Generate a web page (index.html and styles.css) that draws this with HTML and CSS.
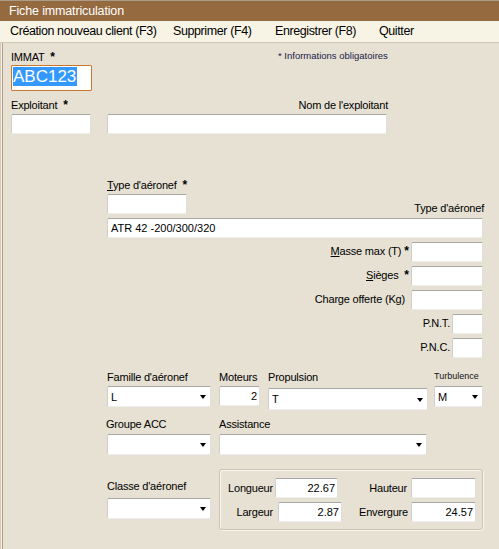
FILE: index.html
```html
<!DOCTYPE html>
<html lang="fr">
<head>
<meta charset="utf-8">
<title>Fiche immatriculation</title>
<link rel="stylesheet" href="styles.css">
</head>
<body>
<div class="window">
  <div class="titlebar">Fiche immatriculation</div>
  <nav class="menubar">
    <span class="menu-item m1">Création nouveau client (F3)</span>
    <span class="menu-item m2">Supprimer (F4)</span>
    <span class="menu-item m3">Enregistrer (F8)</span>
    <span class="menu-item m4">Quitter</span>
  </nav>
  <main class="content">
    <section class="row-immat">
      <div class="field w-immat">
        <label class="lbl">IMMAT <span class="req">*</span></label>
        <div class="input input-focus"><span class="sel">ABC123</span></div>
      </div>
      <div class="note">* Informations obligatoires</div>
    </section>

    <section class="row-exploitant">
      <div class="field w80">
        <label class="lbl">Exploitant <span class="req">*</span></label>
        <div class="input h20"></div>
      </div>
      <div class="field w280">
        <label class="lbl right">Nom de l'exploitant</label>
        <div class="input h20"></div>
      </div>
    </section>

    <section class="aircraft">
      <div class="type-head">
        <div class="field w80">
          <label class="lbl"><u>T</u>ype d'aéronef <span class="req">*</span></label>
          <div class="input h20"></div>
        </div>
        <span class="lbl type-right">Type d'aéronef</span>
      </div>
      <div class="input h20 wide">ATR 42 -200/300/320</div>

      <div class="spec">
        <span class="lbl"><u>M</u>asse max (T)<span class="req">*</span></span>
        <div class="input h20 w72"></div>
      </div>
      <div class="spec">
        <span class="lbl"><u>S</u>ièges <span class="req">*</span></span>
        <div class="input h20 w72"></div>
      </div>
      <div class="spec">
        <span class="lbl gap6">Charge offerte (Kg)</span>
        <div class="input h20 w72"></div>
      </div>
      <div class="spec">
        <span class="lbl">P.N.T.</span>
        <div class="input h20 w31"></div>
      </div>
      <div class="spec">
        <span class="lbl">P.N.C.</span>
        <div class="input h20 w31"></div>
      </div>
    </section>

    <section class="row-famille">
      <div class="field w104">
        <label class="lbl">Famille d'aéronef</label>
        <div class="select"><span class="val">L</span><span class="arrow"></span></div>
      </div>
      <div class="field w41">
        <label class="lbl">Moteurs</label>
        <div class="input h20 num">2</div>
      </div>
      <div class="field w160">
        <label class="lbl">Propulsion</label>
        <div class="select tall"><span class="val">T</span><span class="arrow"></span></div>
      </div>
      <div class="field w49">
        <label class="lbl small">Turbulence</label>
        <div class="select"><span class="val">M</span><span class="arrow"></span></div>
      </div>
    </section>

    <section class="row-groupe">
      <div class="field w104">
        <label class="lbl">Groupe ACC</label>
        <div class="select"><span class="val"></span><span class="arrow"></span></div>
      </div>
      <div class="field w208">
        <label class="lbl">Assistance</label>
        <div class="select"><span class="val"></span><span class="arrow"></span></div>
      </div>
    </section>

    <section class="row-classe">
      <div class="field w104 classe">
        <label class="lbl">Classe d'aéronef</label>
        <div class="select"><span class="val"></span><span class="arrow"></span></div>
      </div>
      <fieldset class="dims">
        <div class="dim-row">
          <span class="lbl dl1">Longueur</span>
          <div class="input h20 num d-in1">22.67</div>
          <span class="lbl dl2">Hauteur</span>
          <div class="input h20 num d-in2"></div>
        </div>
        <div class="dim-row r2">
          <span class="lbl dl1">Largeur</span>
          <div class="input h20 num d-in3">2.87</div>
          <span class="lbl dl3">Envergure</span>
          <div class="input h20 num d-in4">24.57</div>
        </div>
      </fieldset>
    </section>
  </main>
</div>
</body>
</html>
```

FILE: styles.css
```css
html, body {
  margin: 0;
  padding: 0;
}

body {
  background: #e6e1d3;
  font-family: "Liberation Sans", Arial, sans-serif;
  color: #000;
}

.window {
  width: 499px;
  height: 549px;
  overflow: hidden;
  display: flex;
  flex-direction: column;
}

.titlebar {
  box-sizing: border-box;
  height: 21px;
  border-top: 1px solid #aa9b8c;
  background: #956a3f;
  color: #fff;
  font-size: 12.5px;
  letter-spacing: -0.15px;
  line-height: 20px;
  padding-left: 9px;
}

.menubar {
  box-sizing: border-box;
  height: 22px;
  background: #f7f4e6;
  border-bottom: 1px solid #cdc6b7;
  font-size: 12.5px;
  letter-spacing: -0.4px;
  line-height: 21px;
  display: flex;
  padding-left: 10px;
}

.menu-item { white-space: nowrap; }
.m1 { width: 163px; }
.m2 { width: 102px; }
.m3 { width: 104px; }

.content {
  flex: 1;
  padding-left: 11px;
  box-shadow: inset 1px 0 0 #dcc7b4, inset 2px 0 0 #f6efe6, inset 3px 0 0 #ab9e8f;
}

.lbl {
  font-size: 11px;
  line-height: 13px;
  height: 13px;
  display: block;
  white-space: nowrap;
  letter-spacing: -0.2px;
}

.lbl.right { text-align: right; margin-right: -1px; }

.req {
  font-weight: bold;
  font-size: 12px;
  letter-spacing: 0;
  margin-left: 3px;
}

.field {
  display: flex;
  flex-direction: column;
}

.input {
  box-sizing: border-box;
  background: #fff;
  border: 1px solid;
  border-color: #a5a5a5 #dedede #eeeeee #cfcfcf;
  border-radius: 2px;
  font-size: 11px;
  line-height: 18px;
  padding: 0 2px;
  white-space: nowrap;
  overflow: hidden;
}

.h20 { height: 20px; }
.num { text-align: right; }

/* Row: IMMAT */
.row-immat {
  display: flex;
  align-items: flex-start;
  padding-top: 8px;
}

.w-immat { width: 81px; }

.input-focus {
  height: 26px;
  margin-top: 1px;
  border: 1px solid #c8782e;
  border-radius: 1px;
  padding: 1px 0 0 1px;
  font-size: 17px;
  line-height: 19px;
}

.sel {
  display: inline-block;
  background: #3399ff;
  color: #fff;
  height: 19px;
  padding-right: 1px;
}

.note {
  margin-left: 186px;
  margin-top: -1px;
  font-size: 9.5px;
  line-height: 11px;
  color: #1b2048;
  white-space: nowrap;
}

/* Row: exploitant */
.row-exploitant {
  display: flex;
  gap: 16px;
  margin-top: 8px;
}

.row-exploitant .lbl { margin-bottom: 2px; }

.w80 { width: 80px; }
.w280 { width: 280px; }

/* Aircraft block */
.aircraft {
  margin-left: 96px;
  width: 376px;
  margin-top: 45px;
}

.type-head {
  display: flex;
  justify-content: space-between;
  align-items: flex-end;
}

.type-head .lbl { margin-bottom: 2px; }
.type-head .type-right { margin-bottom: -1px; margin-right: -1px; }

.wide {
  margin-top: 4px;
  padding-left: 3px;
}

.spec {
  display: flex;
  justify-content: flex-end;
  align-items: center;
  gap: 2px;
  margin-top: 4px;
  height: 20px;
}

.spec .lbl { margin-top: -2px; }
.gap6 { margin-right: 4px; }

.w72 { width: 72px; }
.w31 { width: 31px; }

/* Row: famille */
.row-famille {
  display: flex;
  margin-left: 96px;
  margin-top: 13px;
  height: 36px;
  align-items: flex-start;
}

.row-famille .lbl { margin-bottom: 2px; }

.w104 { width: 104px; }
.w41 { width: 41px; margin-left: 8px; }
.w160 { width: 160px; margin-left: 8px; }
.w49 { width: 49px; margin-left: 6px; }
.w208 { width: 208px; margin-left: 8px; }

.lbl.small {
  font-size: 9px;
  letter-spacing: 0;
  color: #111;
  margin-top: -1px;
  margin-bottom: 3px !important;
}

.select {
  box-sizing: border-box;
  height: 21px;
  background: #fff;
  border: 1px solid;
  border-color: #a5a5a5 #dedede #eeeeee #cfcfcf;
  border-radius: 2px;
  display: flex;
  align-items: center;
  padding: 0 4px 0 3px;
  font-size: 11px;
}

.select .val { flex: 1; }

.select.tall {
  height: 22px;
  margin-top: 2px;
}

.arrow {
  width: 0;
  height: 0;
  border-left: 3.5px solid transparent;
  border-right: 3.5px solid transparent;
  border-top: 4px solid #000;
  margin-top: 1px;
}

/* Row: groupe */
.row-groupe {
  display: flex;
  margin-left: 96px;
  margin-top: 11px;
}

.row-groupe .lbl { margin-bottom: 3px; }
.row-groupe .w104 .lbl { margin-left: -1px; }

/* Row: classe */
.row-classe {
  display: flex;
  margin-left: 96px;
  margin-top: 14px;
  align-items: flex-start;
}

.classe { padding-top: 11px; }
.classe .lbl { margin-bottom: 5px; }

.dims {
  box-sizing: border-box;
  margin: 0 0 0 8px;
  padding: 8px 0 0 0;
  width: 264px;
  height: 61px;
  border: 1px solid #c9c4b5;
  border-radius: 3px;
  box-shadow: inset 1px 1px 0 #f7f5ee, 1px 1px 0 #f7f5ee;
  min-width: 0;
}

.dim-row {
  display: flex;
  align-items: center;
  height: 20px;
}

.dim-row.r2 { margin-top: 4px; }

.dim-row .lbl { text-align: right; }

.dl1 { width: 53px; }
.dl2 { width: 69px; }
.dl3 { width: 66px; }

.d-in1 { width: 63px; margin-left: 2px; }
.d-in2 { width: 65px; margin-left: 4px; }
.d-in3 { width: 64px; margin-left: 5px; }
.d-in4 { width: 65px; margin-left: 3px; }
```
